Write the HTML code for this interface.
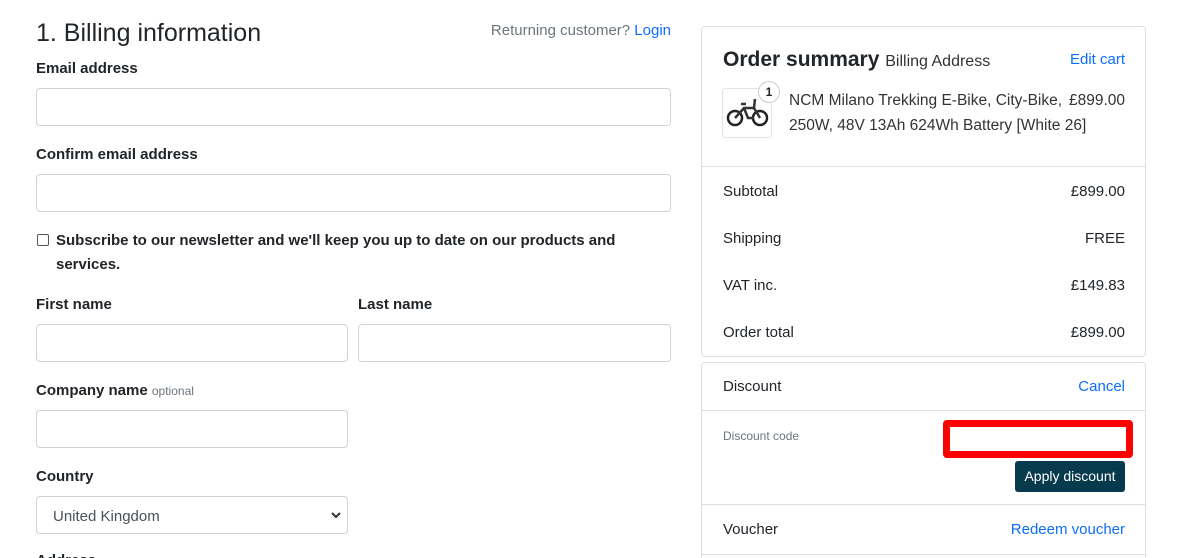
<!DOCTYPE html><html style="height:558px;overflow:hidden"><head><style>
*{box-sizing:border-box;margin:0;padding:0}
body{width:1193px;height:558px;overflow:hidden;background:#fff;font-family:"Liberation Sans",sans-serif;color:#212529;position:relative;font-size:15px}
.a{position:absolute;white-space:nowrap}
.lbl{font-size:15px;font-weight:600;color:#212529}
.in{position:absolute;border:1px solid #ced4da;border-radius:4px;background:#fff;height:38px}
.blue{color:#0d6efd}
.card{position:absolute;left:701px;width:445px;border:1px solid #dfdfdf;border-radius:4px}
.hr{position:absolute;left:702px;width:443px;height:1px;background:#dfdfdf}
</style></head><body>
<div class="a" style="left:36px;top:19px;font-size:25px;">1. Billing information</div>
<div class="a" style="right:522px;top:22px;color:#6c757d">Returning customer? <span class="blue">Login</span></div>
<div class="a lbl" style="left:36px;top:60px">Email address</div>
<div class="in" style="left:36px;top:88px;width:635px"></div>
<div class="a lbl" style="left:36px;top:146px">Confirm email address</div>
<div class="in" style="left:36px;top:174px;width:635px"></div>
<div class="a" style="left:37px;top:234px;width:12px;height:12px;border:1px solid #555;border-radius:2px"></div>
<div class="a lbl" style="left:56px;top:229px;line-height:24px;white-space:normal;width:600px">Subscribe to our newsletter and we'll keep you up to date on our products and services.</div>
<div class="a lbl" style="left:36px;top:296px">First name</div>
<div class="a lbl" style="left:358px;top:296px">Last name</div>
<div class="in" style="left:36px;top:324px;width:312px"></div>
<div class="in" style="left:358px;top:324px;width:313px"></div>
<div class="a lbl" style="left:36px;top:382px">Company name <span style="font-size:12px;font-weight:400;color:#6c757d">optional</span></div>
<div class="in" style="left:36px;top:410px;width:312px"></div>
<div class="a lbl" style="left:36px;top:468px">Country</div>
<div class="in" style="left:36px;top:496px;width:312px"><span class="a" style="left:16px;top:11px;color:#495057">United Kingdom</span><svg class="a" style="left:294px;top:14px" width="10" height="8" viewBox="0 0 10 8"><path d="M1 2l4 4 4-4" stroke="#333" stroke-width="2" fill="none"/></svg></div>
<div class="a lbl" style="left:36px;top:552px">Address</div>

<div class="card" style="top:26px;height:331px"></div>
<div class="a" style="left:723px;top:48px;font-size:21px;font-weight:600">Order summary <span style="font-size:16px;font-weight:400;color:#333">Billing Address</span></div>
<div class="a blue" style="right:68px;top:51px">Edit cart</div>
<div class="a" style="left:722px;top:88px;width:50px;height:50px;border:1px solid #e3e3e3;border-radius:3px">
<svg width="48" height="48" viewBox="0 0 48 48"><circle cx="12" cy="29" r="7" stroke="#222" stroke-width="2.5" fill="none"/><circle cx="37" cy="29" r="7" stroke="#222" stroke-width="2.5" fill="none"/><path d="M12 29l9-10h10l6 10M21 19l4 10h6M32 10l-1 9M18 15h5" stroke="#333" stroke-width="2.5" fill="none"/></svg></div>
<div class="a" style="left:758px;top:81px;width:22px;height:22px;border-radius:50%;background:#fff;border:1px solid #ccc;font-size:12px;font-weight:700;text-align:center;line-height:20px">1</div>
<div class="a" style="left:789px;top:88px;color:#333;line-height:25px;font-size:15.5px">NCM Milano Trekking E-Bike, City-Bike,<br>250W, 48V 13Ah 624Wh Battery [White 26]</div>
<div class="a" style="right:68px;top:88px;color:#333;line-height:25px;font-size:15.5px">£899.00</div>
<div class="hr" style="top:166px"></div>
<div class="a" style="left:723px;top:183px">Subtotal</div><div class="a" style="right:68px;top:183px">£899.00</div>
<div class="a" style="left:723px;top:230px">Shipping</div><div class="a" style="right:68px;top:230px">FREE</div>
<div class="a" style="left:723px;top:277px">VAT inc.</div><div class="a" style="right:68px;top:277px">£149.83</div>
<div class="a" style="left:723px;top:324px">Order total</div><div class="a" style="right:68px;top:324px">£899.00</div>

<div class="card" style="top:362px;height:210px"></div>
<div class="a" style="left:723px;top:378px">Discount</div><div class="a blue" style="right:68px;top:378px">Cancel</div>
<div class="hr" style="top:410px"></div>
<div class="a" style="left:723px;top:429px;font-size:12px;color:#6c757d">Discount code</div>
<div class="a" style="left:943px;top:420px;width:190px;height:38px;border:7px solid #f00;border-radius:4px;background:#fff"></div>
<div class="a" style="left:1015px;top:461px;width:110px;height:31px;background:#083a4d;border-radius:3px;color:#fff;font-size:14px;text-align:center;line-height:31px">Apply discount</div>
<div class="hr" style="top:504px"></div>
<div class="a" style="left:723px;top:521px">Voucher</div><div class="a blue" style="right:68px;top:521px">Redeem voucher</div>
<div class="hr" style="top:554px"></div>
</body></html>
